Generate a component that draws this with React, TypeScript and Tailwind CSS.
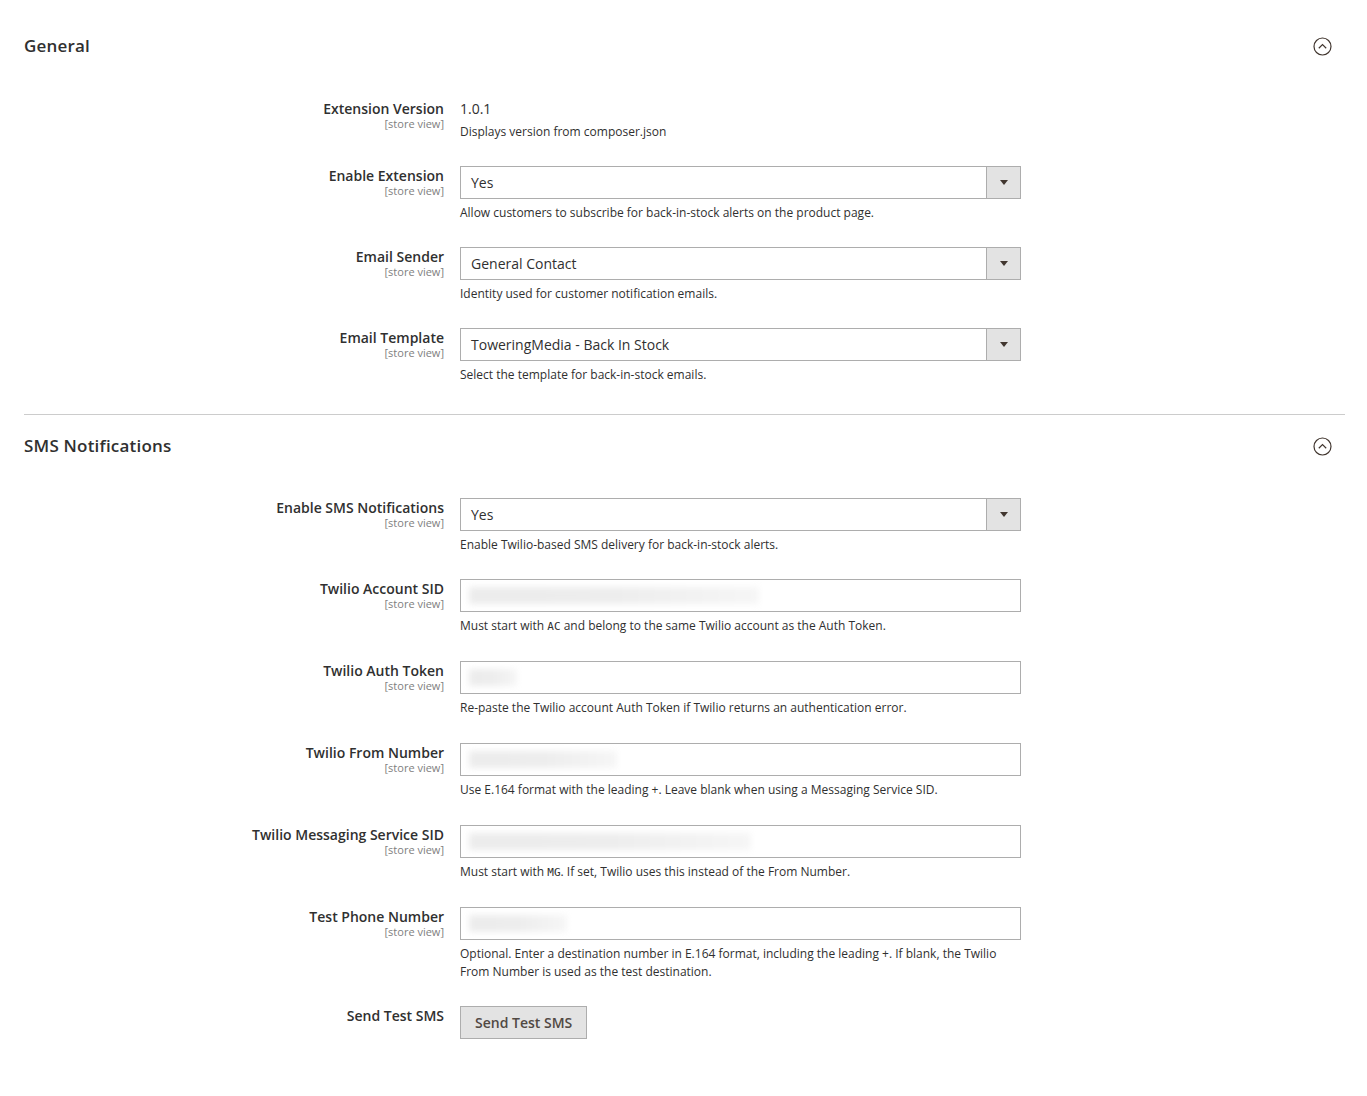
import React from "react";

const font = { fontFamily: '"Open Sans", "Noto Sans", Arial, sans-serif' };

function CollapseIcon() {
  return (
    <svg width="19" height="19" viewBox="0 0 19 19" fill="none" aria-hidden>
      <circle cx="9.5" cy="9.5" r="8.5" stroke="#41362f" strokeWidth="1.2" />
      <path d="M5.8 11.2 L9.5 7.6 L13.2 11.2" stroke="#41362f" strokeWidth="1.2" fill="none" />
    </svg>
  );
}

function SectionHeader({ title, first }: { title: string; first?: boolean }) {
  return (
    <div
      className={`flex items-center justify-between ${first ? "pt-[34px] pb-[41px]" : "pt-[19px] pb-[40px]"} pr-[13px]`}
    >
      <h2 className="text-[17px] leading-[24px] font-semibold text-[#303030] tracking-[0.2px]">{title}</h2>
      <CollapseIcon />
    </div>
  );
}

function Row({
  label,
  scope = true,
  children,
  note,
  tall,
}: {
  label: string;
  scope?: boolean;
  children: React.ReactNode;
  note?: React.ReactNode;
  tall?: boolean;
}) {
  return (
    <div className={`flex ${tall ? "pb-[26px]" : "pb-[25px]"}`}>
      <div className="w-[420px] shrink-0 text-right pt-[1px]">
        <div className="text-[14px] leading-[18px] font-semibold text-[#303030]">{label}</div>
        {scope && <div className="text-[11px] leading-[12px] text-[#808080]">[store view]</div>}
      </div>
      <div className="ml-[16px] w-[561px]">
        {children}
        {note && <div className="mt-[5px] text-[12px] leading-[18px] text-[#303030]">{note}</div>}
      </div>
    </div>
  );
}

function Select({ value }: { value: string }) {
  return (
    <div className="flex h-[33px] border border-[#adadad] bg-white">
      <div className="flex-1 flex items-center pl-[10px] text-[14px] text-[#303030]">{value}</div>
      <div className="w-[34px] border-l border-[#adadad] bg-[#e3e3e3] flex items-center justify-center">
        <div className="w-0 h-0 border-l-[4px] border-r-[4px] border-t-[5px] border-l-transparent border-r-transparent border-t-[#41362f]" />
      </div>
    </div>
  );
}

// Input whose stored secret is shown smudged out
function MaskedInput({ width }: { width: number }) {
  return (
    <div className="flex items-center h-[33px] border border-[#adadad] bg-white pl-[8px]">
      <div
        className="h-[17px] bg-gradient-to-r from-[#ececec] via-[#ededed] to-[#f6f6f6] blur-[3px]"
        style={{ width }}
      />
    </div>
  );
}

const Code = ({ children }: { children: React.ReactNode }) => (
  <span className="text-[11px] leading-[12px]" style={{ fontFamily: '"DejaVu Sans Mono", monospace' }}>
    {children}
  </span>
);

export default function App() {
  return (
    <div className="min-h-[1096px] bg-white pl-[24px] pr-[22px]" style={font}>
      <SectionHeader title="General" first />
      <Row label="Extension Version" note="Displays version from composer.json">
        <div className="pt-[1px] text-[14px] leading-[18px] text-[#303030]">1.0.1</div>
      </Row>
      <Row label="Enable Extension" note="Allow customers to subscribe for back-in-stock alerts on the product page.">
        <Select value="Yes" />
      </Row>
      <Row label="Email Sender" note="Identity used for customer notification emails.">
        <Select value="General Contact" />
      </Row>
      <Row label="Email Template" note="Select the template for back-in-stock emails.">
        <Select value="ToweringMedia - Back In Stock" />
      </Row>

      <div className="border-t border-[#cccccc] mt-[5px]" />

      <SectionHeader title="SMS Notifications" />
      <Row label="Enable SMS Notifications" note="Enable Twilio-based SMS delivery for back-in-stock alerts.">
        <Select value="Yes" />
      </Row>
      <Row
        tall
        label="Twilio Account SID"
        note={<>Must start with <Code>AC</Code> and belong to the same Twilio account as the Auth Token.</>}
      >
        <MaskedInput width={290} />
      </Row>
      <Row tall label="Twilio Auth Token" note="Re-paste the Twilio account Auth Token if Twilio returns an authentication error.">
        <MaskedInput width={48} />
      </Row>
      <Row
        tall
        label="Twilio From Number"
        note="Use E.164 format with the leading +. Leave blank when using a Messaging Service SID."
      >
        <MaskedInput width={148} />
      </Row>
      <Row
        tall
        label="Twilio Messaging Service SID"
        note={<>Must start with <Code>MG</Code>. If set, Twilio uses this instead of the From Number.</>}
      >
        <MaskedInput width={282} />
      </Row>
      <Row
        label="Test Phone Number"
        note="Optional. Enter a destination number in E.164 format, including the leading +. If blank, the Twilio From Number is used as the test destination."
      >
        <MaskedInput width={98} />
      </Row>
      <Row label="Send Test SMS" scope={false}>
        <button className="h-[33px] px-[14px] border border-[#adadad] bg-[#e3e3e3] text-[14px] font-semibold text-[#514943]">
          Send Test SMS
        </button>
      </Row>
    </div>
  );
}
